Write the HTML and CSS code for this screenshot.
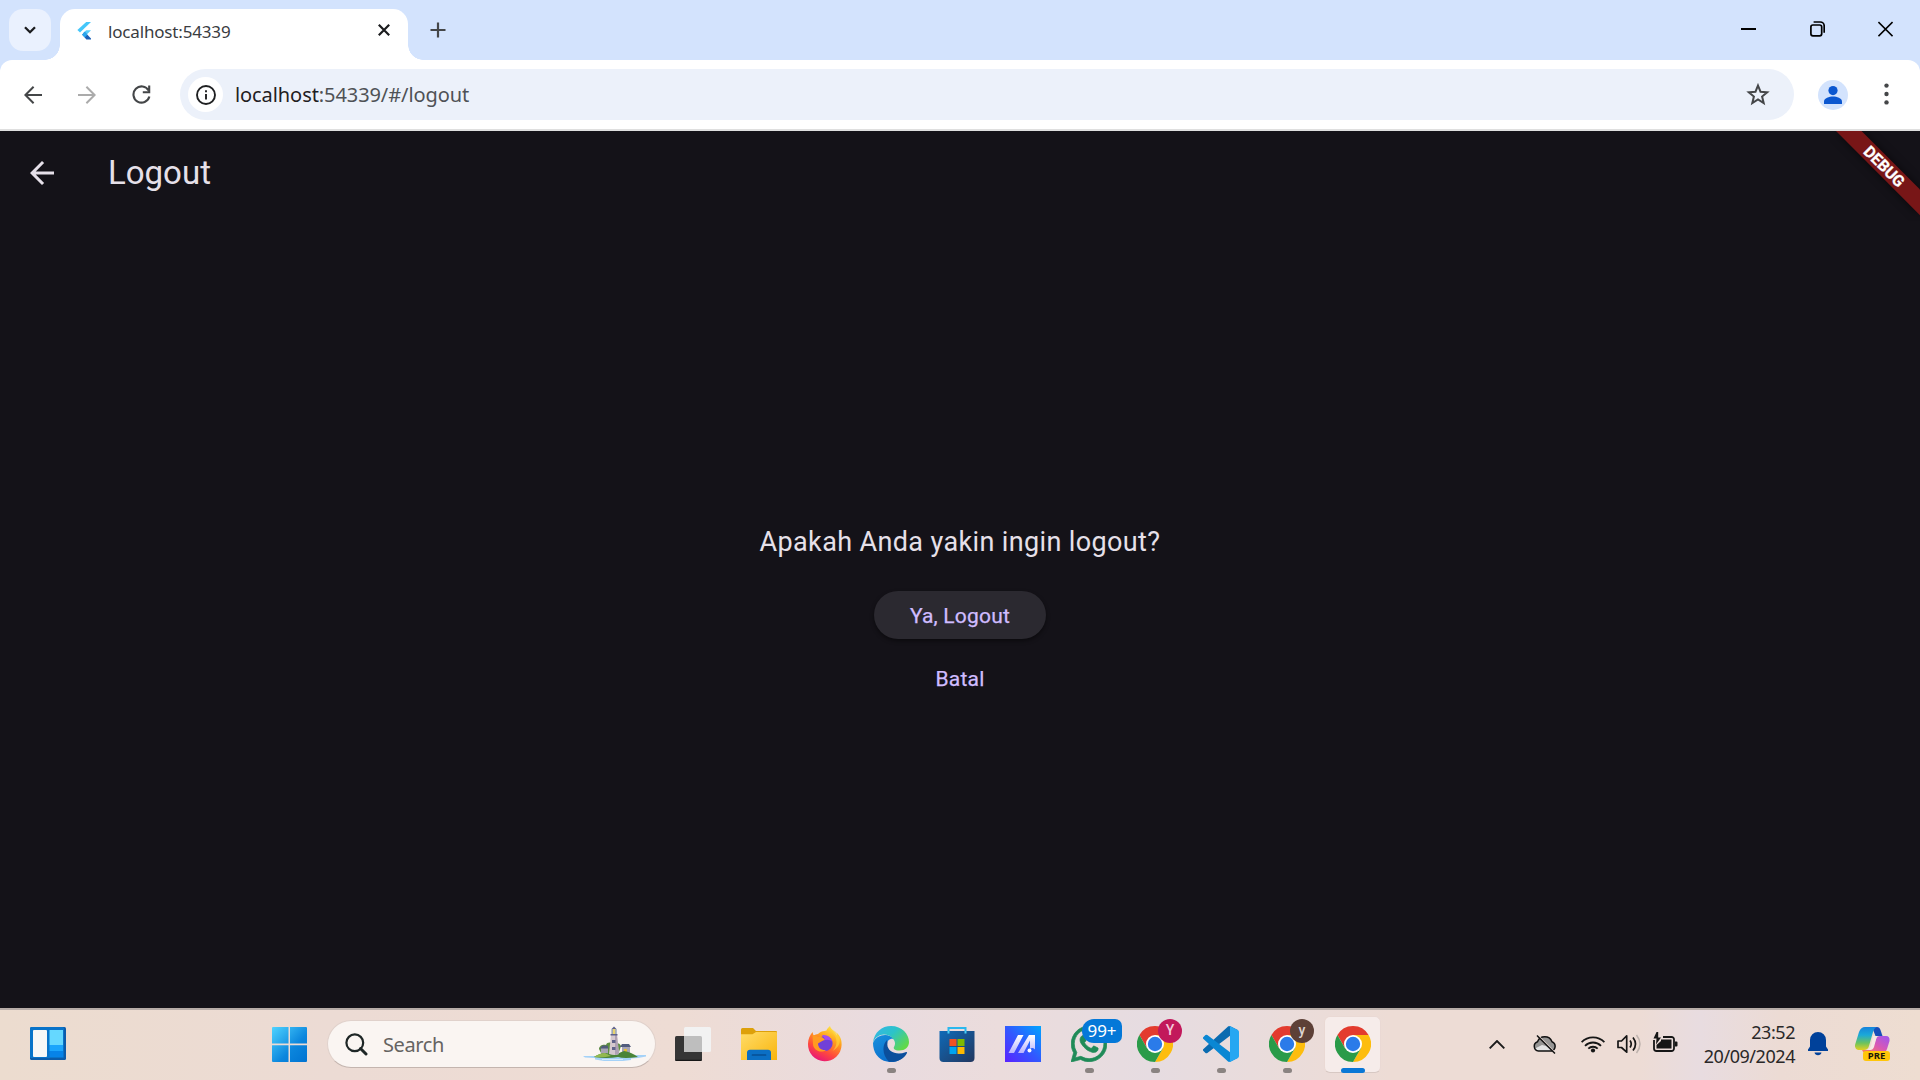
FILE: index.html
```html
<!DOCTYPE html>
<html lang="id">
<head>
<meta charset="utf-8">
<title>localhost:54339</title>
<link rel="stylesheet" href="styles.css">
</head>
<body>
<svg class="defs" width="0" height="0" aria-hidden="true">
  <defs>
    <linearGradient id="win" gradientUnits="userSpaceOnUse" x1="0" y1="0" x2="35" y2="35"><stop offset="0" stop-color="#4fd3ff"/><stop offset=".6" stop-color="#0b86dd"/><stop offset="1" stop-color="#0073d1"/></linearGradient>
    <linearGradient id="folder" x1="0" y1="0" x2="1" y2="1"><stop offset="0" stop-color="#ffdc69"/><stop offset="1" stop-color="#f9b50c"/></linearGradient>
    <linearGradient id="store" x1="0" y1="0" x2="1" y2="1"><stop offset="0" stop-color="#0f6ab8"/><stop offset="1" stop-color="#22375f"/></linearGradient>
    <linearGradient id="asus" x1="0" y1="1" x2="1" y2="0"><stop offset="0" stop-color="#5a22ff"/><stop offset=".5" stop-color="#3159ff"/><stop offset="1" stop-color="#00a5ff"/></linearGradient>
    <linearGradient id="asusbar" x1="0" y1="0" x2="0" y2="1"><stop offset="0" stop-color="#fff"/><stop offset="1" stop-color="#b9b4ff"/></linearGradient>
    <linearGradient id="fox" x1=".8" y1="0" x2=".3" y2="1"><stop offset="0" stop-color="#fff14a"/><stop offset=".35" stop-color="#ffa31c"/><stop offset=".7" stop-color="#ff4a3c"/><stop offset="1" stop-color="#e6127d"/></linearGradient>
    <linearGradient id="edgeTop" x1="0" y1="0" x2="1" y2=".7"><stop offset="0" stop-color="#35b4ea"/><stop offset=".5" stop-color="#2cc3c9"/><stop offset="1" stop-color="#62d947"/></linearGradient>
    <linearGradient id="edgeMid" x1="0" y1="0" x2=".6" y2="1"><stop offset="0" stop-color="#1790dd"/><stop offset="1" stop-color="#0b6ccb"/></linearGradient>
    <linearGradient id="copA" x1="0" y1="0" x2="0" y2="1"><stop offset="0" stop-color="#1683dc"/><stop offset=".35" stop-color="#1ba9d8"/><stop offset=".7" stop-color="#6cc35d"/><stop offset="1" stop-color="#e4d020"/></linearGradient>
    <linearGradient id="copB" x1="1" y1="0" x2="0" y2="1"><stop offset="0" stop-color="#9b55f2"/><stop offset=".5" stop-color="#d958b4"/><stop offset="1" stop-color="#ff8452"/></linearGradient>
    <symbol id="chrome" viewBox="0 0 48 48">
      <path fill="#e33b2e" d="M24 12H44.785A24 24 0 0 0 3.215 12L13.608 30 24 24z"/>
      <path fill="#fdbd0d" d="M44.785 12A24 24 0 0 1 24 48L34.392 30 24 24V12z"/>
      <path fill="#2a9b49" d="M24 48A24 24 0 0 1 3.215 12L13.608 30 24 24 34.392 30z"/>
      <circle cx="24" cy="24" r="12" fill="#fff"/><circle cx="24" cy="24" r="9.6" fill="#2b7be9"/>
    </symbol>
  </defs>
</svg>

<header class="tabstrip">
  <button class="tab-search"><svg width="12" height="8" viewBox="0 0 12 8"><path d="M1 1.2l5 5 5-5" fill="none" stroke="#1b1c1e" stroke-width="2.3"/></svg></button>
  <div class="tab">
    <svg class="favicon" width="14" height="19" viewBox="0 0 14 19"><path fill="#45c7fa" d="M9.2 1H14L3 11.500.4 9z"/><path fill="#45c7fa" d="M9.3 9.3H14L9 14.2 6.3 11.6z" opacity=".9"/><path fill="#1b5fb8" d="M5.2 13.6L7.8 11 14 17.6V18.400H9.400z"/><path fill="#2aa7ee" d="M5 13.800l2.700-2.700 2.600 2.700-2.600 2.600z"/></svg>
    <span class="tab-title">localhost:54339</span>
    <svg width="12" height="12" viewBox="0 0 12 12"><path d="M.8.8l10.400 10.400M11.200.8L.8 11.200" stroke="#1b1c1e" stroke-width="2.200"/></svg>
  </div>
  <svg class="newtab" width="16" height="16" viewBox="0 0 16 16"><path d="M8 .5v15M.5 8h15" stroke="#444648" stroke-width="2.200"/></svg>
  <div class="winctl">
    <svg width="15" height="16" viewBox="0 0 15 16"><path d="M0 8h15" stroke="#000" stroke-width="2"/></svg>
    <svg width="15" height="16" viewBox="0 0 15 16"><g fill="none" stroke="#000" stroke-width="1.700"><rect x=".9" y="4" width="10.800" height="10.800" rx="2"/><path d="M3.600 1h6.600a4 4 0 0 1 4 4v6.800"/></g></svg>
    <svg width="15" height="16" viewBox="0 0 15 16"><path d="M.4 1l14.200 14.200M14.600 1L.4 15.200" stroke="#000" stroke-width="1.700"/></svg>
  </div>
</header>

<div class="toolbar-wrap"><nav class="toolbar">
  <svg class="nav-icon" width="18" height="18" viewBox="0 0 18 18"><path d="M18 9H1.800M9.600.8L1.400 9l8.200 8.200" fill="none" stroke="#444648" stroke-width="2"/></svg>
  <svg class="nav-icon" width="18" height="18" viewBox="0 0 18 18"><path d="M0 9h16.200M8.400.8L16.600 9l-8.200 8.200" fill="none" stroke="#ababab" stroke-width="2"/></svg>
  <svg class="nav-icon" width="19" height="19" viewBox="0 0 19 19"><path d="M16.600 5.500A8.100 8.100 0 1 0 17.400 11.600M17.200.6V7.200H10.800" fill="none" stroke="#444648" stroke-width="2.100"/></svg>
  <div class="omnibox">
    <span class="site-info"><svg width="20" height="20" viewBox="0 0 20 20"><circle cx="10" cy="10" r="9" fill="none" stroke="#1f2022" stroke-width="1.900"/><path d="M10 9v5.500M10 5.300v2" stroke="#1f2022" stroke-width="1.900"/></svg></span>
    <span class="url">localhost<span class="url-rest">:54339/#/logout</span></span>
    <svg class="star" width="24" height="23" viewBox="0 0 24 23"><path d="M12 2.500l2.500 6.200 6.700.5-5.100 4.300 1.600 6.500L12 16.500 6.300 20l1.600-6.500L2.800 9.200l6.700-.5z" fill="none" stroke="#444648" stroke-width="2"/></svg>
  </div>
  <svg class="avatar" width="30" height="30" viewBox="0 0 30 30"><circle cx="15" cy="15" r="15" fill="#d3e3fd"/><circle cx="15" cy="10.600" r="4.600" fill="#0b57d0"/><path fill="#0b57d0" d="M6 24v-2.500c0-3.500 5.200-5 9-5s9 1.500 9 5V24z"/></svg>
  <svg width="5" height="22" viewBox="0 0 5 22"><g fill="#444648"><circle cx="2.500" cy="2.600" r="2.200"/><circle cx="2.500" cy="11" r="2.200"/><circle cx="2.500" cy="19.400" r="2.200"/></g></svg>
</nav></div>

<main class="app">
  <div class="appbar">
    <svg width="24" height="24" viewBox="0 0 24 24"><path fill="#e6e0e9" d="M24 10.500H5.740l8.390-8.390L12 0 0 12l12 12 2.120-2.120L5.740 13.500H24z"/></svg>
    <h1>Logout</h1>
  </div>
  <section class="confirm">
    <p>Apakah Anda yakin ingin logout?</p>
    <button class="btn btn-raised">Ya, Logout</button>
    <button class="btn">Batal</button>
  </section>
  <svg class="debug" width="90" height="90" viewBox="0 0 90 90"><path class="ribbon" d="M6 0H31.500L90 58.500V84.300z"/><text transform="translate(54.300 35.500) rotate(45)" text-anchor="middle" y="5.500">DEBUG</text></svg>
</main>

<footer class="taskbar">
  <svg class="widgets" width="36" height="33" viewBox="0 0 36 33"><rect width="36" height="33" rx="1.500" fill="#0b5cab"/><rect width="34" height="31" rx="1.500" fill="#0873c9"/><rect x="3" y="3" width="14" height="27" rx="1" fill="#f7f7f7"/><path fill="#65d8ff" d="M19.500 3H33v15H19.500z"/><path fill="#1ba5fc" d="M19.500 18H33v6H19.500z"/><path fill="#0783e8" d="M19.500 24H33v6H19.500z"/></svg>
  <svg class="start" width="35" height="35" viewBox="0 0 35 35"><path fill="url(#win)" d="M1 0h15.500v16.500H0V1a1 1 0 0 1 1-1zM18 0h16a1 1 0 0 1 1 1v15.500H18zM0 18.300h16.500V35H1a1 1 0 0 1-1-1zM18 18.300h17V34a1 1 0 0 1-1 1H18z"/></svg>
  <div class="search">
    <svg width="23" height="23" viewBox="0 0 23 23"><circle cx="9.800" cy="9.800" r="8.400" fill="none" stroke="#1e2626" stroke-width="2.200"/><path d="M15.500 15.500l5.500 5.500" stroke="#1e2626" stroke-width="3" stroke-linecap="round"/></svg>
    <span>Search</span>
    <svg class="island" width="64" height="36" viewBox="0 0 64 36">
      <path fill="#a5d2f8" d="M1 30h12l6-1h27l8 0h10v1.500l-8 1.500-7 .5v1.500l-8 1H22l-9-1.500v-1.500L3 31.500z"/>
      <path fill="#d2eafa" d="M20 33h21v1H20z"/>
      <path fill="#5d8e41" d="M17 23c0-4 5-5 7-4 1-3 5-3 7-1 3-2 7-1 8 2l-3 9H20z"/>
      <path fill="#a7a3b4" d="M19 22h7v6h-7zM40 21h8v6h-8z"/><path fill="#515b7c" d="M17.500 22.500l3-3h5l1 3zM38 21l2-3h7l2 3z"/><path fill="#e3bd35" d="M42 23h3v4h-3z"/>
      <path fill="#4a8437" d="M12 31q6-4 12-4l8 2 10-4q7 1 14 6-14 2-20 0-11 2-24 0z"/><path fill="#93b94f" d="M12 31q6-4 11-4l6 3q-8 2-17 1z"/>
      <path fill="#d5c8ce" d="M29 9h6l2 19q-4 2-10 0z"/><path fill="#afa1b4" d="M33 9h2l2 19-4 1z"/><path fill="#60628a" d="M30 14h3.500v3H30zM30 21h3.500v3H30zM28.500 8h7v1.500h-7zM29.500 3l2.500-2.500L34.500 3z"/><path fill="#e8d36f" d="M30.500 3h3v5h-3z"/><path fill="#7e8fae" d="M29.500 3h1.200v5h-1.200zM33.400 3h1.200v5h-1.200z"/>
    </svg>
  </div>
  <div class="apps">
    <div class="cell"><svg width="36" height="36" viewBox="0 0 36 36"><rect y="10" width="27" height="25" rx="1.500" fill="#353535"/><path d="M.5 34.300h26" stroke="#111"/><rect x="9" y="1" width="27" height="25" rx="1.500" fill="#f2f2f2"/><path d="M9 10h16.500a1.500 1.500 0 0 1 1.500 1.500V26H9z" fill="#bebebe"/></svg></div>
    <div class="cell"><svg width="36" height="36" viewBox="0 0 36 36"><path fill="#dda00a" d="M0 3.500A1.500 1.500 0 0 1 1.500 2H12l3 3h20a1 1 0 0 1 1 1v4H0z"/><path fill="url(#folder)" d="M0 8.300h11.500L15 6h20.500L36 7v27H0z"/><path fill="#0b6fc4" d="M6 34V26.500A3 3 0 0 1 9 23.700h18a3 3 0 0 1 3 2.800V34z"/><path d="M11.500 29h13" stroke="#074f94" stroke-width="1.700" stroke-linecap="round"/></svg></div>
    <div class="cell"><svg width="36" height="36" viewBox="0 0 36 36"><path fill="url(#fox)" d="M1 18C1 13 3 9 5.500 6l1 3.500C8 8.500 9.500 8 11 8c2-2 4-3 6.500-3l2-.5C20 2.500 22 1 23 0c1 4 5 5.500 6.500 9.500C30.500 9 30 7.500 30 7c4 4 4.800 8 4.600 12A16.800 16.800 0 0 1 1 18z"/><circle cx="18" cy="17.500" r="7.600" fill="#7140d8"/><path fill="#a34cf0" d="M15 9q8-1 10.500 7-3-3-7-2z"/><path fill="#ff9b20" d="M5.500 9q4 .5 5.500 2c2-.6 5-.5 7 3-2.500.5-5 2-7 3.500 0 4 3 7 8 6.500-5 4-13 0-13-6z"/><path fill="#ffd43e" d="M22.500 1c.5 5 7 7 7 15 0 4-2 7-4 9 8-4 9-12 5-17-1.500-3-6-4-8-7z" opacity=".65"/></svg></div>
    <div class="cell"><svg width="36" height="36" viewBox="0 0 36 36"><path fill="url(#edgeMid)" d="M0 17C3 9 15 6 21 13c-5-1-8 3-7 8 1 7 8 11 17 9C26 36 19 37 14 35.500 5 34 0 26 0 17z"/><path fill="#0b4f9c" d="M14 14c-5 5-5 15 2 21.700C24 36.500 31 33 34 27c.3-1-.5-1.300-1.500-.8C23 30 13 25 14.500 17z"/><path fill="url(#edgeTop)" d="M0 17C1 6 9 0 18 0c11 0 18 8 18 16 0 5-4 8.500-9.500 8.500-5 0-7-2-5-4.500C24 15 18 8.500 11 8.500 5 8.500 1 13 0 17z"/></svg><i class="dot"></i></div>
    <div class="cell"><svg width="36" height="36" viewBox="0 0 36 36"><path d="M9.500 8V2h17v6" fill="none" stroke="#2bb8ee" stroke-width="2"/><path fill="url(#store)" d="M.5 5h35v27a4 4 0 0 1-4 4h-27a4 4 0 0 1-4-4z"/><path d="M9.500 5v2.500M26.500 5v2.500" stroke="#48cdf5" stroke-width="2"/><path fill="#f25022" d="M10.500 13h7v7h-7z"/><path fill="#7fba00" d="M18.500 13h7v7h-7z"/><path fill="#00a4ef" d="M10.500 21h7v7h-7z"/><path fill="#ffb900" d="M18.500 21h7v7h-7z"/></svg></div>
    <div class="cell"><svg width="36" height="36" viewBox="0 0 36 36"><path fill="url(#asus)" d="M0 0h36v36H0z"/><path fill="url(#asusbar)" d="M13 9h5.500L9 27H3.500zM24 9h6v14.500a3.300 3.300 0 0 0-5-.5V14.500L18.500 27H13z"/><circle cx="24.500" cy="24.500" r="2" fill="#fff"/></svg></div>
    <div class="cell"><svg width="36" height="36" viewBox="0 0 24 24"><path fill="#1f8b58" stroke="#1f8b58" stroke-width=".5" d="M17.472 14.382c-.297-.149-1.758-.867-2.030-.967-.273-.099-.471-.148-.67.15-.197.297-.767.966-.94 1.164-.173.199-.347.223-.644.075-.297-.15-1.255-.463-2.390-1.475-.883-.788-1.480-1.761-1.653-2.059-.173-.297-.018-.458.13-.606.134-.133.298-.347.446-.52.149-.174.198-.298.298-.497.099-.198.05-.371-.025-.52-.075-.149-.669-1.612-.916-2.207-.242-.579-.487-.5-.669-.51-.173-.008-.371-.01-.57-.01-.198 0-.52.074-.792.372-.272.297-1.040 1.016-1.040 2.479 0 1.462 1.065 2.875 1.213 3.074.149.198 2.096 3.200 5.077 4.487.709.306 1.262.489 1.694.625.712.227 1.360.195 1.871.118.571-.085 1.758-.719 2.006-1.413.248-.694.248-1.289.173-1.413-.074-.124-.272-.198-.57-.347m-5.421 7.403h-.004a9.870 9.870 0 0 1-5.031-1.378l-.361-.214-3.741.982.998-3.648-.235-.374a9.860 9.860 0 0 1-1.510-5.260c.001-5.450 4.436-9.884 9.888-9.884 2.640 0 5.122 1.030 6.988 2.898a9.825 9.825 0 0 1 2.893 6.994c-.003 5.450-4.437 9.884-9.885 9.884m8.413-18.297A11.815 11.815 0 0 0 12.050 0C5.495 0 .16 5.335.157 11.892c0 2.096.547 4.142 1.588 5.945L.057 24l6.305-1.654a11.882 11.882 0 0 0 5.683 1.448h.005c6.554 0 11.890-5.335 11.893-11.893a11.821 11.821 0 0 0-3.480-8.413Z"/></svg><b class="count">99+</b><i class="dot"></i></div>
    <div class="cell"><svg width="36" height="36"><use href="#chrome"/></svg><b class="profile pink">Y</b><i class="dot"></i></div>
    <div class="cell"><svg width="36" height="36" viewBox="0 0 100 100"><path fill="#0a6bb0" d="M96.460 10.800L75.860.87a6.230 6.230 0 0 0-7.100 1.200L1.300 63.600a4.170 4.170 0 0 0 0 6.150l5.500 5a4.170 4.170 0 0 0 5.320.24L93.360 13.400A4.130 4.130 0 0 1 100 16.700z"/><path fill="#0a87d3" d="M96.460 89.200l-20.600 9.920a6.230 6.230 0 0 1-7.100-1.200L1.300 36.400a4.170 4.170 0 0 1 0-6.150l5.500-5a4.170 4.170 0 0 1 5.320-.24l81.240 61.620A4.130 4.130 0 0 0 100 83.330z"/><path fill="#26a7f2" d="M75.860 99.130a6.230 6.230 0 0 1-7.100-1.200c2.300 2.300 6.240.67 6.240-2.600V4.670c0-3.260-3.940-4.900-6.240-2.600a6.230 6.230 0 0 1 7.100-1.200l20.600 9.900A6.250 6.250 0 0 1 100 16.400v67.200a6.250 6.250 0 0 1-3.540 5.630z"/></svg><i class="dot"></i></div>
    <div class="cell"><svg width="36" height="36"><use href="#chrome"/></svg><b class="profile brown">y</b><i class="dot"></i></div>
    <div class="cell"><div class="tile"><svg width="36" height="36"><use href="#chrome"/></svg></div><i class="dot current"></i></div>
  </div>
  <div class="tray">
    <svg width="16" height="9" viewBox="0 0 16 9"><path d="M.7 8.300L8 1l7.300 7.300" fill="none" stroke="#1b1b1b" stroke-width="1.900"/></svg>
    <svg class="cloud" width="24" height="20" viewBox="0 0 24 20"><path d="M5.500 17A4.800 4.800 0 0 1 4.500 7.700a7.800 7.800 0 0 1 14.500 0A4.900 4.900 0 0 1 18.500 17z" fill="#969594"/><path fill="#e3e3e3" d="M2 14.500L9 11l4 1 7 4.500-2 .5H5z"/><path d="M5.500 17A4.800 4.800 0 0 1 4.500 7.700a7.800 7.800 0 0 1 14.500 0A4.900 4.900 0 0 1 18.500 17z" fill="none" stroke="#111" stroke-width="1.500"/><path d="M4.800 1.200l18 18" stroke="#eee0da" stroke-width="1.300"/><path d="M4 1.500l18 18" stroke="#111" stroke-width="1.500"/></svg>
    <svg class="wifi" width="24" height="18" viewBox="0 0 24 18"><g fill="none" stroke="#161616" stroke-width="1.800"><path d="M.6 7.200a16 16 0 0 1 22.800 0M4 10.800a11.300 11.300 0 0 1 16 0M7.300 13.700a6.600 6.600 0 0 1 9.400 0"/></g><circle cx="12" cy="15.500" r="2.100" fill="#161616"/></svg>
    <svg class="sound" width="24" height="20" viewBox="0 0 24 20"><path d="M1 7h3.500L9.700 1.800v16.400L4.500 13.500H1z" fill="none" stroke="#161616" stroke-width="1.700" stroke-linejoin="round"/><path d="M13 6.500q2.500 3.500 0 7M16 3.500q5 6.500 0 13" fill="none" stroke="#161616" stroke-width="1.700"/><path d="M19.500 1q7 9 0 18" fill="none" stroke="#bdb2ad" stroke-width="1.500"/></svg>
    <svg class="battery" width="25" height="21" viewBox="0 0 25 21"><path d="M10 5h8.500a2.500 2.500 0 0 1 2.500 2.500v9a2.500 2.500 0 0 1-2.500 2.500h-15A2.500 2.500 0 0 1 1 16.500V8" fill="none" stroke="#161616" stroke-width="1.800"/><path d="M8 7.500h10.500v9h-15V13L8 9z" fill="#161616"/><path d="M22 9.500h1.500a1 1 0 0 1 1 1v3a1 1 0 0 1-1 1H22zM3.500 0L.5 6.500h3L3 12.500l5-7H5.200V0z" fill="#161616"/></svg>
    <div class="clock"><span>23:52</span><span class="date">20/09/2024</span></div>
    <svg class="bell" width="20" height="24" viewBox="0 0 20 24"><path fill="#00419a" d="M10 0a8 8 0 0 1 8 8v6.500l2 3V19H0v-1.500l2-3V8a8 8 0 0 1 8-8zM6.500 20.500h7a3.600 3.600 0 0 1-7 0z"/></svg>
    <div class="copilot"><svg width="36" height="30" viewBox="0 0 36 30"><path fill="#174db8" d="M17 0h5q2.500 0 3.500 3l2 6h-7z"/><path fill="url(#copB)" d="M25 9h6q4 0 3.500 5l-2.500 8q-1.500 4-5 4H10q-2 0-3-3h7q3 0 4-3l3-8q1-3 4-3z"/><path fill="url(#copA)" d="M10 0h12q-3 1-4 5l-4 14q-1 4-5 4H3q-3.500-1-3-5L4 5q2-5 6-5z"/><path fill="#f7e9e4" d="M18 9h4l-3 11q-1 3-4 3h-3q3-1 4-4z"/></svg><b>PRE</b></div>
  </div>
</footer>
</body>
</html>
```
FILE: styles.css
```css
* { box-sizing: border-box; }
body {
  margin: 0;
  width: 1920px;
  height: 1080px;
  display: flex;
  flex-direction: column;
  overflow: hidden;
  font-family: "Noto Sans", "Open Sans", sans-serif;
}
svg { display: block; flex: none; }
.defs { position: absolute; }
button { border: 0; padding: 0; font: inherit; }

/* Tab strip */
.tabstrip {
  height: 60px;
  flex: none;
  display: flex;
  background: #d3e3fd;
  padding: 9px 20px 0 9px;
}
.tab-search {
  width: 42px;
  height: 42px;
  border-radius: 14px;
  background: #eaf1fe;
  display: grid;
  place-items: center;
}
.tab {
  position: relative;
  width: 348px;
  height: 51px;
  margin-left: 9px;
  padding: 0 18px 9px 17px;
  border-radius: 15px 15px 0 0;
  background: #fff;
  display: flex;
  align-items: center;
}
.tab::before, .tab::after {
  content: "";
  position: absolute;
  bottom: 0;
  width: 15px;
  height: 15px;
}
.tab::before { left: -15px; background: radial-gradient(circle at 0 0, transparent 14.5px, #fff 15px); }
.tab::after { right: -15px; background: radial-gradient(circle at 100% 0, transparent 14.5px, #fff 15px); }
.tab-title {
  flex: 1;
  margin: 3px 0 0 17px;
  font-size: 17px;
  line-height: 24px;
  letter-spacing: -0.17px;
  color: #3a3c3f;
}
.newtab { margin: 13px 0 0 22px; }
.winctl { display: flex; gap: 53.500px; margin: 12px 0 0 auto; padding-right: 7px; }

/* Toolbar */
.toolbar-wrap { background: #d3e3fd; flex: none; }
.toolbar {
  height: 71px;
  display: flex;
  align-items: center;
  padding: 0 31px 2px 24px;
  border-bottom: 2px solid #dfdfdf;
  border-radius: 12px 12px 0 0;
  background: #fff;
}
.nav-icon { margin: 2px 36px 0 0; }
.nav-icon:nth-child(3) { margin: 2px 29px 0 0; }
.omnibox {
  flex: 1;
  height: 51px;
  margin-top: 2px;
  border-radius: 26px;
  background: #ecf1fa;
  display: flex;
  align-items: center;
  padding: 0 24px 0 8px;
}
.site-info {
  width: 35px;
  height: 35px;
  border-radius: 50%;
  background: #fff;
  display: grid;
  place-items: center;
}
.url { flex: 1; margin-left: 12px; font-size: 20px; letter-spacing: -0.08px; color: #1f2022; }
.url-rest { color: #4f5256; }
.avatar { margin: 2px 36px 0 24px; }

/* Application page */
.app {
  position: relative;
  flex: 1;
  display: flex;
  flex-direction: column;
  background: #141218;
  font-family: Roboto, sans-serif;
  color: #e6e0e9;
}
.appbar { height: 84px; display: flex; align-items: center; gap: 54px; padding-left: 30px; }
.appbar h1 { margin: 0; font-size: 33px; font-weight: 400; line-height: 42px; }
.confirm { flex: 1; display: flex; flex-direction: column; align-items: center; justify-content: center; padding-top: 2px; }
.confirm p { margin: 0 0 30px; font-size: 27px; line-height: 38.5px; letter-spacing: 0.37px; }
.btn {
  height: 48px;
  padding: 1px 36px 0;
  border-radius: 24px;
  background: none;
  color: #d0bcff;
  font-size: 21px;
  font-weight: 450;
  letter-spacing: 0.2px;
  -webkit-text-stroke: 0.25px #d0bcff;
}
.btn-raised { margin-bottom: 15px; background: #2b2930; box-shadow: 0 2px 4px rgba(0, 0, 0, .45); }
.debug { position: absolute; top: 0; right: 0; }
.ribbon { fill: #781617; filter: drop-shadow(0 0 5px rgba(0, 0, 0, .6)); }
.debug text { fill: #fff; stroke: #fff; stroke-width: .3px; font: 700 15.800px Roboto, sans-serif; }

/* Taskbar */
.taskbar {
  height: 72px;
  flex: none;
  display: flex;
  align-items: center;
  border-top: 2px solid #b7aca7;
  padding: 0 29px 0 30px;
  background: linear-gradient(90deg, #ecdccf 0, #ecdbd4 330px, #eedcd4 680px, #e9dbdf 880px, #ebdcdc 1000px, #e6dce1 1150px, #eddcd5 1390px, #eddcd5 1640px, #e8dce0 1700px, #ecdbd4 1780px, #eeddd1 1920px);
}
.widgets { margin-top: -3px; }
.start { margin: -1px 20px 0 206px; }
.search {
  width: 329px;
  height: 48px;
  flex: none;
  margin-top: -2px;
  border: 1.5px solid #e0d1cb;
  border-bottom-color: #c4b5af;
  border-radius: 24px;
  background: #faf5f2;
  display: flex;
  align-items: center;
  padding: 0 9px 0 17px;
}
.search span { margin-left: 15px; font-size: 20px; letter-spacing: -0.4px; color: #656361; }
.island { margin-left: auto; }
.apps { display: flex; flex: none; margin: -2px 0 0 4px; }
.cell { position: relative; width: 66px; height: 72px; display: grid; place-items: center; }
.dot { position: absolute; left: 28.500px; bottom: 7px; width: 9px; height: 5px; border-radius: 3px; background: #8a8381; }
.dot.current { left: 21px; width: 24px; background: #0a78d6; }
.tile {
  width: 57px;
  height: 57px;
  margin-left: -1px;
  border: 1px solid #ead9d4;
  border-bottom-color: #d7c8c3;
  border-radius: 6px;
  background: #f6ecea;
  display: grid;
  place-items: center;
}
.count {
  position: absolute;
  left: 26px;
  top: 11px;
  width: 40px;
  height: 24px;
  border-radius: 12px 7px 7px 12px;
  background: #0478d8;
  color: #fff;
  font-size: 17px;
  font-weight: 400;
  line-height: 24px;
  text-align: center;
}
.profile {
  position: absolute;
  left: 36px;
  top: 11px;
  width: 24px;
  height: 24px;
  border-radius: 50%;
  color: #f4c9da;
  font: 500 14px/23px Roboto, sans-serif;
  text-align: center;
}
.pink { background: #c2185b; }
.brown { background: #5d4037; color: #ded5d2; }
.tray { display: flex; align-items: center; margin: -2px 0 0 103px; }
.cloud { margin-left: 28px; }
.wifi { margin-left: 24px; }
.sound { margin-left: 12px; }
.battery { margin: -3px 0 0 12px; }
.clock {
  width: 117px;
  margin-top: -1px;
  display: flex;
  flex-direction: column;
  align-items: flex-end;
  font-size: 18px;
  line-height: 24px;
  letter-spacing: -0.45px;
  color: #2a2828;
}
.bell { margin-left: 13px; }
.copilot { position: relative; margin: -4px 0 0 27px; }
.copilot b {
  position: absolute;
  left: 8px;
  top: 24px;
  width: 27px;
  height: 10px;
  border-radius: 3px;
  background: #ffc60a;
  color: #1d1708;
  font-size: 9.500px;
  line-height: 10px;
  text-align: center;
}
```
